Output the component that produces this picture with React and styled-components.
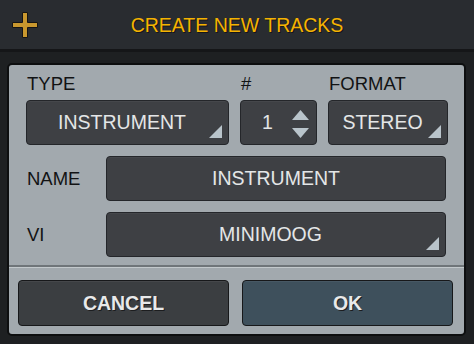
import React from 'react';
import styled, { createGlobalStyle } from 'styled-components';

const PAGE_BG = '#1e2022';
const HEADER_BG = '#292c30';
const PANEL_BG = '#a2a9ae';
const CONTROL_BG = '#3e4044';
const CONTROL_BORDER = '#24262a';
const CONTROL_TEXT = '#e4e6e7';
const GOLD = '#f5b301';
const ARROW = '#b9c4cb';

const GlobalStyle = createGlobalStyle`
  html, body {
    margin: 0;
    padding: 0;
    background: ${PAGE_BG};
  }
  body {
    font-family: "Liberation Sans", Arial, sans-serif;
    width: 474px;
    height: 344px;
    overflow: hidden;
  }
`;

const Dialog = styled.div`
  width: 474px;
  height: 344px;
  display: flex;
  flex-direction: column;
  background: ${PAGE_BG};
`;

const Header = styled.header`
  height: 49px;
  background: ${HEADER_BG};
  border-bottom: 3px solid #151618;
  display: grid;
  grid-template-columns: 1fr auto 1fr;
  align-items: center;
`;

const AddIcon = styled.div`
  padding-left: 12px;
  display: flex;
  align-items: center;
  svg {
    display: block;
  }
`;

const Title = styled.h1`
  margin: 0;
  font-size: 19.5px;
  font-weight: 400;
  color: ${GOLD};
  text-shadow: 1px 1px 0 #15161a;
  padding-top: 1px;
`;

const Body = styled.main`
  padding: 11px 8px 0 7px;
`;

const Panel = styled.section`
  background: ${PANEL_BG};
  border: 2px solid #0d0e0f;
  border-radius: 5px;
  height: 269px;
  display: flex;
  flex-direction: column;
`;

const TopGrid = styled.div`
  display: grid;
  grid-template-columns: 203px 77px 120px;
  column-gap: 11px;
  padding: 8px 17px 0 17px;
`;

const Field = styled.div`
  display: flex;
  flex-direction: column;
`;

const Label = styled.span`
  font-size: 18.5px;
  line-height: 22px;
  color: #121314;
  margin-left: 1px;
  margin-bottom: 5px;
`;

const Control = styled.div`
  position: relative;
  height: 45px;
  box-sizing: border-box;
  background: ${CONTROL_BG};
  border: 1px solid ${CONTROL_BORDER};
  border-radius: 4px;
  display: flex;
  align-items: center;
  justify-content: ${p => (p.$left ? 'flex-start' : 'center')};
  padding: ${p => (p.$left ? '0 0 0 21px' : p.$arrow ? '0 11px 0 0' : '0')};
  color: ${CONTROL_TEXT};
  font-size: 19.5px;
  box-shadow: inset 0 1px 0 rgba(255, 255, 255, 0.04);
`;

const CornerArrow = styled.span`
  position: absolute;
  right: 6px;
  bottom: 6px;
  width: 0;
  height: 0;
  border-style: solid;
  border-width: 0 0 13px 13px;
  border-color: transparent transparent ${ARROW} transparent;
`;

const Stepper = styled.div`
  position: absolute;
  right: 7px;
  top: 9px;
  display: flex;
  flex-direction: column;
  gap: 8px;
  svg {
    display: block;
  }
`;

const Rows = styled.div`
  display: flex;
  flex-direction: column;
  gap: 11px;
  padding: 11px 18px 0 17px;
`;

const Row = styled.div`
  display: grid;
  grid-template-columns: 80px 1fr;
  align-items: center;
`;

const RowLabel = styled.span`
  font-size: 18.5px;
  color: #121314;
  margin-left: 1px;
`;

const Separator = styled.hr`
  margin: 8px 0 0;
  border: none;
  height: 2px;
  background: #6f7579;
  border-bottom: 1px solid #c3c9cc;
`;

const Buttons = styled.div`
  display: grid;
  grid-template-columns: 211px 211px;
  column-gap: 13px;
  padding: 12px 0 0 9px;
`;

const Button = styled.button`
  height: 46px;
  border: 1px solid #17181a;
  border-radius: 4px;
  background: ${p => (p.$primary ? '#3e505c' : '#3b3e41')};
  color: #e8e9ea;
  font-family: inherit;
  font-weight: 700;
  font-size: 19.5px;
  text-shadow: 1px 1px 0 #1c1d1f;
  box-shadow: inset 0 1px 0 rgba(255, 255, 255, 0.05);
  padding: 0;
  padding-top: 1px;
`;

const PlusSvg = () => (
  <svg width="26" height="26" viewBox="0 0 26 26">
    <path
      d="M10.5 0.5 H15.5 V10.5 H25.5 V15.5 H15.5 V25.5 H10.5 V15.5 H0.5 V10.5 H10.5 Z"
      fill="#c8972e"
      stroke="#141414"
      strokeWidth="1"
    />
  </svg>
);

const UpSvg = () => (
  <svg width="17" height="10" viewBox="0 0 17 10">
    <polygon points="8.5,0 17,10 0,10" fill={ARROW} />
  </svg>
);

const DownSvg = () => (
  <svg width="17" height="10" viewBox="0 0 17 10">
    <polygon points="0,0 17,0 8.5,10" fill={ARROW} />
  </svg>
);

export default function App() {
  return (
    <>
      <GlobalStyle />
      <Dialog>
        <Header>
          <AddIcon><PlusSvg /></AddIcon>
          <Title>CREATE NEW TRACKS</Title>
          <div />
        </Header>
        <Body>
          <Panel>
            <TopGrid>
              <Field>
                <Label>TYPE</Label>
                <Control $arrow>
                  INSTRUMENT
                  <CornerArrow />
                </Control>
              </Field>
              <Field>
                <Label>#</Label>
                <Control $left>
                  1
                  <Stepper>
                    <UpSvg />
                    <DownSvg />
                  </Stepper>
                </Control>
              </Field>
              <Field>
                <Label>FORMAT</Label>
                <Control $arrow>
                  STEREO
                  <CornerArrow />
                </Control>
              </Field>
            </TopGrid>
            <Rows>
              <Row>
                <RowLabel>NAME</RowLabel>
                <Control>INSTRUMENT</Control>
              </Row>
              <Row>
                <RowLabel>VI</RowLabel>
                <Control $arrow>
                  MINIMOOG
                  <CornerArrow />
                </Control>
              </Row>
            </Rows>
            <Separator />
            <Buttons>
              <Button>CANCEL</Button>
              <Button $primary>OK</Button>
            </Buttons>
          </Panel>
        </Body>
      </Dialog>
    </>
  );
}
